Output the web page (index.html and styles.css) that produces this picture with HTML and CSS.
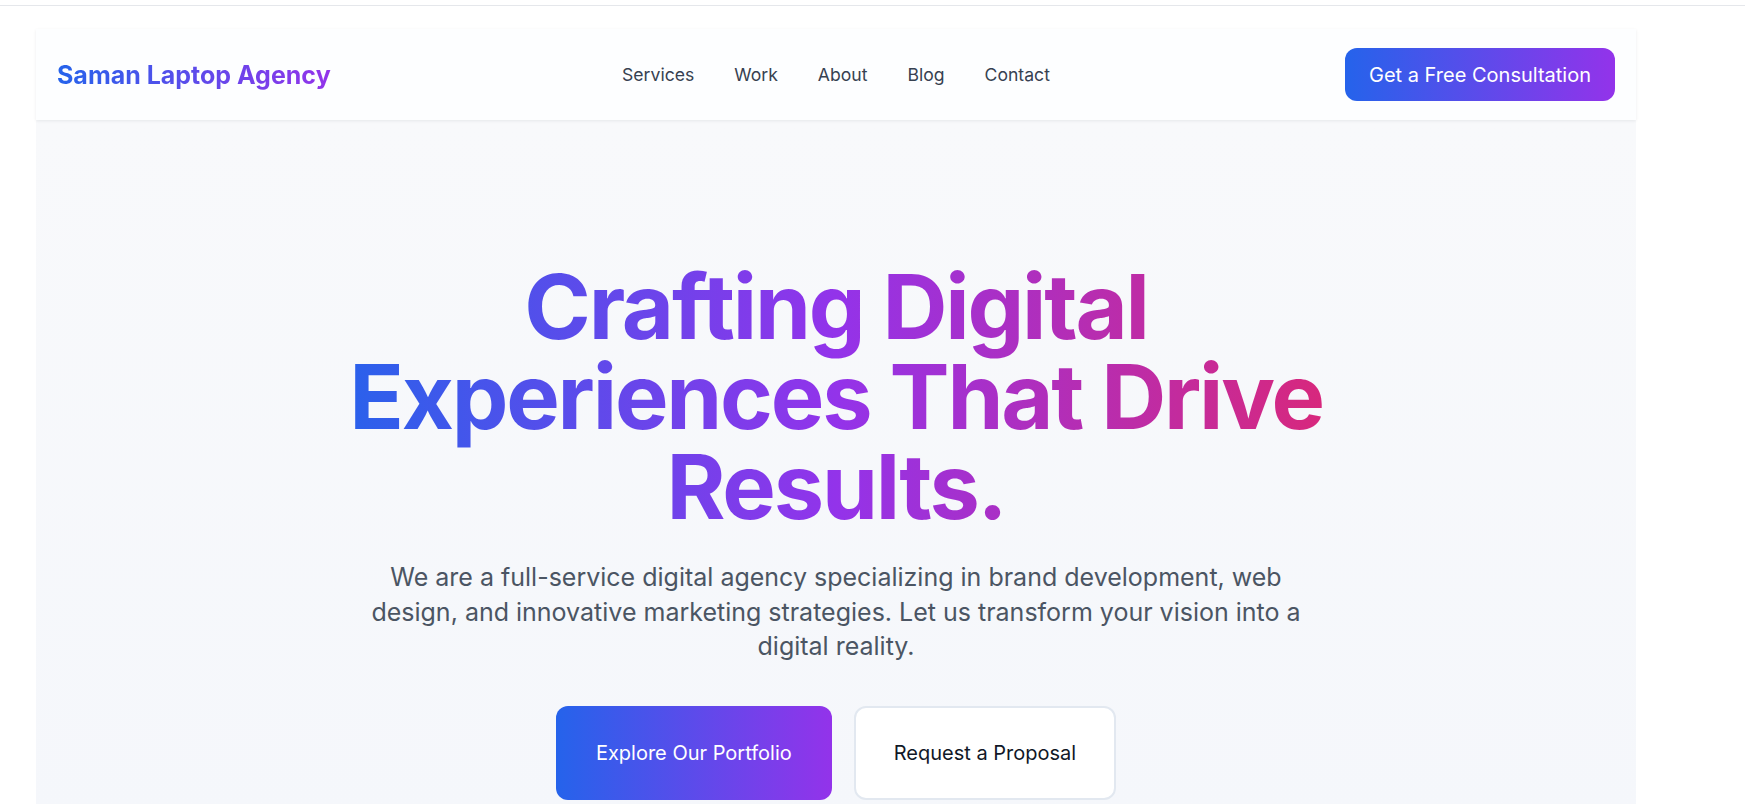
FILE: index.html
```html
<!DOCTYPE html>
<html lang="en">
<head>
<meta charset="utf-8">
<title>Saman Laptop Agency</title>
<link rel="stylesheet" href="styles.css">
</head>
<body>
<div class="topbar"></div>
<div class="frame">
  <header class="site-header">
    <a class="logo" href="#">Saman Laptop Agency</a>
    <nav class="nav">
      <a href="#">Services</a>
      <a href="#">Work</a>
      <a href="#">About</a>
      <a href="#">Blog</a>
      <a href="#">Contact</a>
    </nav>
    <div class="header-cta">
      <a class="btn btn-gradient btn-small" href="#">Get a Free Consultation</a>
    </div>
  </header>
  <section class="hero">
    <h1 class="hero-title"><span>Crafting Digital Experiences That Drive Results.</span></h1>
    <p class="hero-text">We are a full-service digital agency specializing in brand development, web design, and innovative marketing strategies. Let us transform your vision into a digital reality.</p>
    <div class="hero-actions">
      <a class="btn btn-gradient btn-large" href="#">Explore Our Portfolio</a>
      <a class="btn btn-outline btn-large" href="#">Request a Proposal</a>
    </div>
  </section>
</div>
</body>
</html>
```

FILE: styles.css
```css
* { box-sizing: border-box; }
html, body { margin: 0; padding: 0; background: #ffffff; }
body {
  font-family: Inter, "Noto Sans", "Liberation Sans", sans-serif;
  color: #111827;
  overflow: hidden;
}
a { text-decoration: none; }

.topbar {
  height: 6px;
  border-bottom: 1px solid #e5e7eb;
}

.frame {
  width: 1600px;
  margin-left: 36px;
  padding-top: 23px;
}

.site-header {
  position: relative;
  z-index: 1;
  height: 91px;
  padding: 0 21px;
  display: grid;
  grid-template-columns: 1fr auto 1fr;
  align-items: center;
  background: #fdfeff;
  box-shadow: 0 1px 3px rgba(15, 23, 42, 0.08);
}

.logo {
  justify-self: start;
  font-size: 25px;
  font-weight: 700;
  background: linear-gradient(90deg, #2563eb, #9333ea);
  -webkit-background-clip: text;
  background-clip: text;
  color: transparent;
}

.nav {
  display: flex;
  gap: 40px;
}
.nav a {
  color: #374151;
  font-size: 17.6px;
  font-weight: 400;
}

.header-cta { justify-self: end; }

.btn {
  display: inline-block;
  border-radius: 12px;
  font-size: 20px;
  line-height: 24px;
}
.btn-gradient {
  background: linear-gradient(90deg, #2563eb, #9333ea);
  color: #ffffff;
}
.btn-small {
  padding: 14.5px 24px;
}
.btn-large {
  padding: 34px 40px;
  line-height: 26px;
}
.btn-outline {
  background: #ffffff;
  color: #111827;
  border: 2px solid #e2e8f0;
  padding: 32px 38px;
}

.hero {
  background: linear-gradient(180deg, #f8f9fb 0%, #f5f7fb 100%);
  padding-top: 142px;
  height: 700px;
  text-align: center;
}

.hero-title {
  max-width: 1024px;
  margin: 0 auto;
  font-size: 90px;
  line-height: 90px;
  font-weight: 700;
  letter-spacing: -0.0245em;
  background: linear-gradient(90deg, #2563eb, #9333ea 50%, #db2777);
  -webkit-background-clip: text;
  background-clip: text;
  color: transparent;
}

.hero-text {
  max-width: 945px;
  margin: 28px auto 0;
  font-size: 25px;
  line-height: 34.5px;
  color: #4b5563;
}

.hero-actions {
  margin-top: 42px;
  display: flex;
  justify-content: center;
  gap: 22px;
}
```
